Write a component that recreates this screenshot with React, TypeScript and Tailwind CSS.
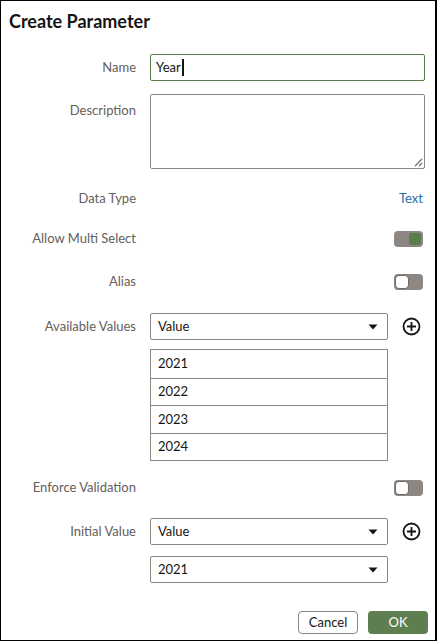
import React from "react";

const font = { fontFamily: "Lato, 'Noto Sans', sans-serif" };

function Caret() {
  return (
    <svg width="10" height="6" viewBox="0 0 10 6" className="shrink-0">
      <path d="M0.5 0.5 L9.5 0.5 L5 5.5 Z" fill="#161513" />
    </svg>
  );
}

function PlusCircle() {
  return (
    <svg width="19" height="19" viewBox="0 0 19 19" className="shrink-0">
      <circle cx="9.5" cy="9.5" r="8" fill="none" stroke="#161513" strokeWidth="1.8" />
      <path d="M9.5 5 V14 M5 9.5 H14" stroke="#161513" strokeWidth="1.8" />
    </svg>
  );
}

function Select({ value }: { value: string }) {
  return (
    <div className="flex h-[27px] w-[238px] items-center justify-between rounded-[2px] border border-[#8c8782] bg-white pl-[7px] pr-[9px] text-[13px] text-[#161513]">
      <span>{value}</span>
      <Caret />
    </div>
  );
}

function Toggle({ on }: { on: boolean }) {
  return (
    <div className="flex h-[16px] w-[29px] items-center rounded-[4px] bg-[#8c8782] px-[1px]">
      {on ? (
        <div className="ml-auto mr-[1px] h-[12px] w-[12px] rounded-[3px] bg-[#5b7d4b]" />
      ) : (
        <div className="h-[14px] w-[14px] rounded-[4px] border border-[#6f6a65] bg-white" />
      )}
    </div>
  );
}

function Row({
  label,
  children,
  className = "",
  labelClass = "items-center",
}: {
  label?: string;
  children: React.ReactNode;
  className?: string;
  labelClass?: string;
}) {
  return (
    <div className={`flex ${className}`}>
      <div className={`flex w-[135px] shrink-0 justify-end text-[13px] text-[#65605b] ${labelClass}`}>
        {label}
      </div>
      <div className="ml-[14px] flex flex-1 items-center">{children}</div>
    </div>
  );
}

export default function App() {
  return (
    <div
      style={font}
      className="flex h-[641px] w-[437px] flex-col border border-r-2 border-black bg-white pr-[10px]"
    >
      <div className="pl-[8px] pt-[8px] text-[18px] font-bold leading-[24px] text-[#161513]">
        Create Parameter
      </div>

      <Row label="Name" className="mt-[21px] h-[27px]">
        <div className="flex h-[27px] w-full items-center rounded-[2px] border border-[#5b7d4b] pl-[5px] text-[13px] text-[#161513]">
          Year<span className="ml-[1px] inline-block h-[17px] w-[2px] bg-[#161513]" />
        </div>
      </Row>

      <Row label="Description" className="mt-[13px] h-[75px]" labelClass="items-start pt-[7px]">
        <div className="relative h-[75px] w-full rounded-[2px] border border-[#8c8782]">
          <svg width="10" height="10" viewBox="0 0 10 10" className="absolute bottom-[1px] right-[1px]">
            <path d="M9 2 L2 9 M9 6 L6 9" stroke="#6f6a65" strokeWidth="1.2" />
          </svg>
        </div>
      </Row>

      <Row label="Data Type" className="mt-[20px] h-[20px]">
        <div className="ml-auto pr-[2px] text-[13px] text-[#1e6fa8]">Text</div>
      </Row>

      <Row label="Allow Multi Select" className="mt-[20px] h-[20px]">
        <div className="ml-auto pr-[2px]">
          <Toggle on />
        </div>
      </Row>

      <Row label="Alias" className="mt-[23px] h-[20px]">
        <div className="ml-auto pr-[2px]">
          <Toggle on={false} />
        </div>
      </Row>

      <Row label="Available Values" className="mt-[21px] h-[27px]">
        <Select value="Value" />
        <div className="ml-[14px]">
          <PlusCircle />
        </div>
      </Row>

      <Row className="mt-[9px]">
        <div className="flex w-[238px] flex-col border border-[#8c8782] text-[13px] text-[#161513]">
          {["2021", "2022", "2023", "2024"].map((y, i) => (
            <div
              key={y}
              className={`flex h-[27.5px] items-center pl-[7px] ${i > 0 ? "border-t border-[#8c8782]" : ""}`}
            >
              {y}
            </div>
          ))}
        </div>
      </Row>

      <Row label="Enforce Validation" className="mt-[17px] h-[20px]">
        <div className="ml-auto pr-[2px]">
          <Toggle on={false} />
        </div>
      </Row>

      <Row label="Initial Value" className="mt-[20px] h-[27px]">
        <Select value="Value" />
        <div className="ml-[14px]">
          <PlusCircle />
        </div>
      </Row>

      <Row className="mt-[11px] h-[27px]">
        <Select value="2021" />
      </Row>

      <div className="-mr-[3px] mt-[28px] flex justify-end gap-[10px]">
        <button className="h-[23px] w-[60px] rounded-[4px] border border-[#8c8782] bg-white text-[13px] text-[#161513]">
          Cancel
        </button>
        <button className="h-[23px] w-[60px] rounded-[4px] bg-[#5f7e4f] text-[13px] text-white">
          OK
        </button>
      </div>
    </div>
  );
}
